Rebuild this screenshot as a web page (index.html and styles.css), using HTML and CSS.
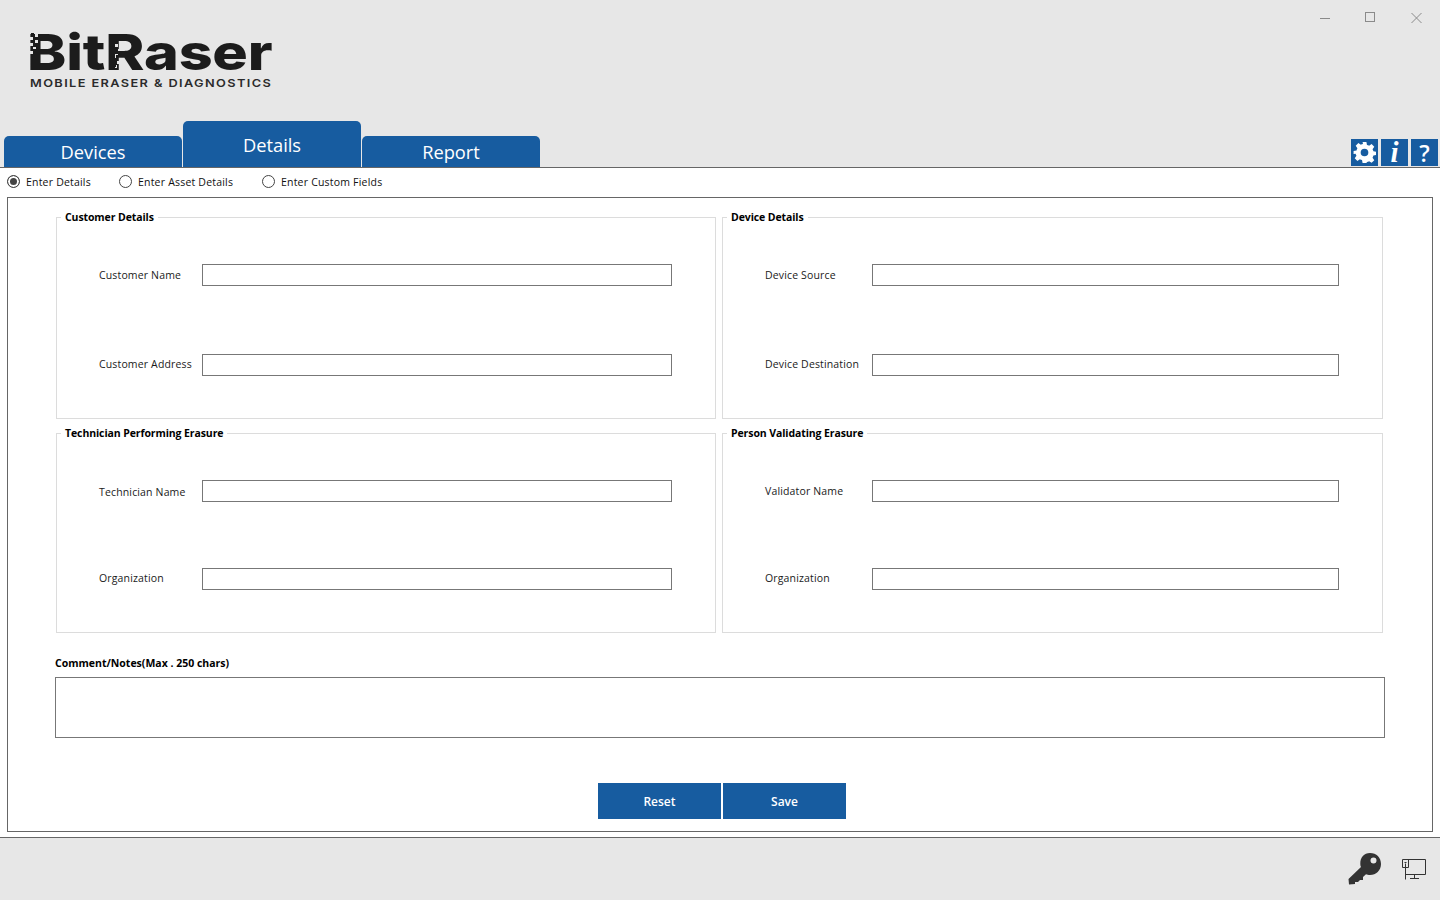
FILE: index.html
```html
<!DOCTYPE html>
<html lang="en">
<head>
<meta charset="utf-8">
<title>BitRaser Mobile Eraser &amp; Diagnostics</title>
<link rel="stylesheet" href="styles.css">
</head>
<body>
<div class="app">
  <header class="header">
    <div class="window-controls">
      <svg class="wc wc-min" width="11" height="12" viewBox="0 0 11 12"><path d="M0 6.500h10" stroke="#8a8a8a" fill="none"/></svg>
      <svg class="wc wc-max" width="11" height="12" viewBox="0 0 11 12"><rect x=".5" y=".5" width="9" height="9" stroke="#8a8a8a" fill="none"/></svg>
      <svg class="wc wc-close" width="11" height="12" viewBox="0 0 11 12"><path d="M.5 1l10 10M10.500 1l-10 10" stroke="#8a8a8a" fill="none"/></svg>
    </div>
    <div class="logo">
      <div class="logo-name">BitRaser</div>
      <div class="logo-sub">MOBILE ERASER &amp; DIAGNOSTICS</div>
      <svg class="logo-bits" width="100" height="40" viewBox="0 0 100 40">
        <g fill="#e7e7e7"><rect x="0" y="5" width="3" height="3"/><rect x="5" y="2" width="3" height="3"/><rect x="0" y="11" width="3" height="3"/><rect x="5" y="8" width="3" height="3"/><rect x="3" y="15" width="3" height="2"/><rect x="0" y="19" width="3" height="3"/><rect x="85" y="12" width="3" height="3"/><rect x="88" y="17" width="2" height="2"/><rect x="85" y="22" width="3" height="4"/><rect x="87" y="29" width="3" height="3"/><rect x="85" y="33" width="2" height="3"/></g>
        <g fill="#1c1c1c"><rect x="1" y="1" width="3" height="3"/><rect x="1" y="8" width="3" height="3"/><rect x="83" y="26" width="3" height="3"/><rect x="86" y="23" width="2" height="3"/><rect x="84" y="33" width="2" height="2"/><rect x="83" y="15" width="2" height="2"/></g>
      </svg>
    </div>
    <div class="tabbar">
      <nav class="tabs">
        <div class="tab">Devices</div>
        <div class="tab tab-active">Details</div>
        <div class="tab">Report</div>
      </nav>
      <div class="tools">
        <div class="tool">
          <svg width="23" height="23" viewBox="0 0 24 24"><path fill="#fff" fill-rule="evenodd" d="M10 1h4l.6 3.100c.8.2 1.500.5 2.200.9l2.600-1.800 2.800 2.800-1.800 2.600c.4.700.7 1.400.9 2.200l3.100.6v3.200l-3.100.6c-.2.800-.5 1.500-.9 2.200l1.800 2.600-2.800 2.800-2.600-1.800c-.7.4-1.400.7-2.200.9L14 23h-4l-.6-3.100c-.8-.2-1.500-.5-2.200-.9l-2.600 1.800-2.800-2.800 1.800-2.600c-.4-.7-.7-1.400-.9-2.200L.6 13.600v-3.200l3.100-.6c.2-.8.5-1.500.9-2.200L2.800 5l2.800-2.800 2.600 1.800c.7-.4 1.400-.7 2.200-.9zM12 8a4 4 0 100 8 4 4 0 000-8z"/></svg>
        </div>
        <div class="tool tool-i">i</div>
        <div class="tool tool-q">?</div>
      </div>
    </div>
  </header>

  <main class="main">
    <div class="radios">
      <label class="radio radio-1"><span class="dot dot-on"></span>Enter Details</label>
      <label class="radio radio-2"><span class="dot"></span>Enter Asset Details</label>
      <label class="radio"><span class="dot"></span>Enter Custom Fields</label>
    </div>
    <div class="frame">
      <div class="groups">
        <fieldset class="group group-top">
          <legend>Customer Details</legend>
          <div class="field"><span class="label">Customer Name</span><div class="input"></div></div>
          <div class="field"><span class="label label-up">Customer Address</span><div class="input"></div></div>
        </fieldset>
        <fieldset class="group group-top group-right">
          <legend>Device Details</legend>
          <div class="field"><span class="label">Device Source</span><div class="input"></div></div>
          <div class="field"><span class="label label-up">Device Destination</span><div class="input"></div></div>
        </fieldset>
        <fieldset class="group group-bottom">
          <legend>Technician Performing Erasure</legend>
          <div class="field"><span class="label label-down">Technician Name</span><div class="input"></div></div>
          <div class="field"><span class="label label-up">Organization</span><div class="input"></div></div>
        </fieldset>
        <fieldset class="group group-bottom group-right">
          <legend>Person Validating Erasure</legend>
          <div class="field"><span class="label">Validator Name</span><div class="input"></div></div>
          <div class="field"><span class="label label-up">Organization</span><div class="input"></div></div>
        </fieldset>
      </div>
      <div class="notes">
        <div class="notes-title">Comment/Notes(Max . 250 chars)</div>
        <div class="notes-box"></div>
      </div>
      <div class="actions">
        <div class="btn">Reset</div>
        <div class="btn">Save</div>
      </div>
    </div>
  </main>

  <footer class="footer">
    <svg class="key" width="34" height="32" viewBox="0 0 34 32"><path fill="#333" fill-rule="evenodd" d="M22 0c6.500 0 11 4.500 11 11s-5 11-11 11c-1.500 0-3-.3-4-.8L15 24v3h-3l-2 2H7v2l-6 .5L.500 26 13 14c-.5-1-.7-2-.7-3.500C12.300 4.500 16 0 22 0zm3.500 4.500a3 3 0 100 6 3 3 0 000-6z"/></svg>
    <svg class="monitor" width="25" height="22" viewBox="0 0 25 22"><g fill="none" stroke="#333"><path d="M.5 1.500h23v15H4"/><path d="M.5 1.500v8h6v-8"/><path d="M3.500 5.500v16"/><path d="M12.500 16.500v4M8 20.500h9"/><path d="M2.500 4.500h2"/></g></svg>
  </footer>
</div>
</body>
</html>
```

FILE: styles.css
```css
* { box-sizing: border-box; }
html, body { margin: 0; padding: 0; height: 100%; overflow: hidden; }
body { background: #e7e7e7; font-family: "Open Sans", "Noto Sans", sans-serif; color: #111; }

.app { height: 900px; display: flex; flex-direction: column; }

.header { height: 167px; position: relative; display: flex; flex-direction: column; justify-content: flex-end; }

.window-controls { position: absolute; top: 12px; left: 1320px; display: flex; }
.wc-min { margin-right: 34px; }
.wc-max { margin-right: 35px; }

.logo { position: absolute; left: 30px; top: 32px; }
.logo-name { font-family: Inter, "Liberation Sans", sans-serif; font-weight: 800; font-size: 50px; line-height: 40px; height: 40px; color: #1c1c1c; transform: scaleX(1.185); transform-origin: left center; letter-spacing: -.2px; white-space: nowrap; margin-left: -3px; }
.logo-bits { position: absolute; left: 0; top: 0; }
.logo-sub { font-family: Inter, "Liberation Sans", sans-serif; font-weight: 600; font-size: 11px; line-height: 14px; letter-spacing: 1.200px; color: #2b2b2b; white-space: nowrap; margin-top: 4px; transform: scaleX(1.16); transform-origin: left center; }

.tabbar { display: flex; justify-content: space-between; align-items: flex-end; padding: 0 2px 0 4px; }
.tabs { display: flex; gap: 1px; align-items: flex-end; }
.tab { width: 178px; height: 31px; background: #175ca0; color: #fff; border-radius: 5px 5px 0 0; font-size: 18.300px; line-height: 32px; text-align: center; }
.tab-active { height: 46px; line-height: 47px; }
.tools { display: flex; gap: 3px; padding-bottom: 1px; }
.tool { width: 27px; height: 27px; background: #175ca0; color: #fff; display: flex; align-items: center; justify-content: center; }
.tool-i { font-family: "Liberation Serif", serif; font-style: italic; font-weight: 700; font-size: 29px; }
.tool-q { font-family: "Open Sans", sans-serif; font-weight: 600; font-size: 23px; }

.main { height: 671px; background: #fff; border-top: 1px solid #666; border-bottom: 1px solid #666; padding: 0 7px 5px; display: flex; flex-direction: column; }

.radios { height: 29px; padding-bottom: 2px; display: flex; align-items: center; font-size: 10.500px; letter-spacing: .2px; }
.radio { display: flex; align-items: center; gap: 6px; }
.radio-1 { width: 112px; }
.radio-2 { width: 143px; }
.dot { width: 13px; height: 13px; border-radius: 50%; border: 1px solid #444; background: #fff; display: block; flex: none; }
.dot-on { background: #444; box-shadow: inset 0 0 0 2px #fff; }

.frame { flex: 1; border: 1px solid #666; display: flex; flex-direction: column; padding: 0 47px; }

.groups { display: grid; grid-template-columns: 660px 661px; column-gap: 6px; row-gap: 7px; margin: 1px 0 0 1px; padding-top: 11px; }
.group { margin: 0; border: 1px solid #dcdcdc; padding: 40px 0 0; min-width: 0; display: flex; flex-direction: column; }
.group-top { height: 209px; gap: 68px; }
.group-bottom { height: 207px; gap: 66px; }
.group legend { font-size: 10.500px; font-weight: 700; line-height: 14px; height: 14px; padding: 0 4px; margin-left: 4px; letter-spacing: -.1px; color: #000; }

.field { display: flex; align-items: center; height: 22px; margin-left: 42px; }
.label { width: 103px; font-size: 10.500px; letter-spacing: .15px; color: #1a1a1a; white-space: nowrap; }
.label-up { margin-top: -2px; }
.label-down { margin-top: 2px; }
.input { width: 470px; height: 22px; border: 1px solid #777; background: #fff; }
.group-right .label { width: 107px; }
.group-right .input { width: 467px; }

.notes { margin-top: 23px; }
.notes-title { font-size: 10.500px; font-weight: 700; line-height: 14px; color: #000; }
.notes-box { margin-top: 7px; height: 61px; width: 1330px; border: 1px solid #777; background: #fff; }

.actions { display: flex; justify-content: center; gap: 2px; margin-top: 45px; margin-left: 4px; }
.btn { width: 123px; height: 36px; background: #175ca0; color: #fff; font-size: 12px; font-weight: 600; line-height: 37px; text-align: center; }

.footer { flex: 1; position: relative; }
.key { position: absolute; left: 1348px; top: 15px; }
.monitor { position: absolute; left: 1402px; top: 20px; }
```
